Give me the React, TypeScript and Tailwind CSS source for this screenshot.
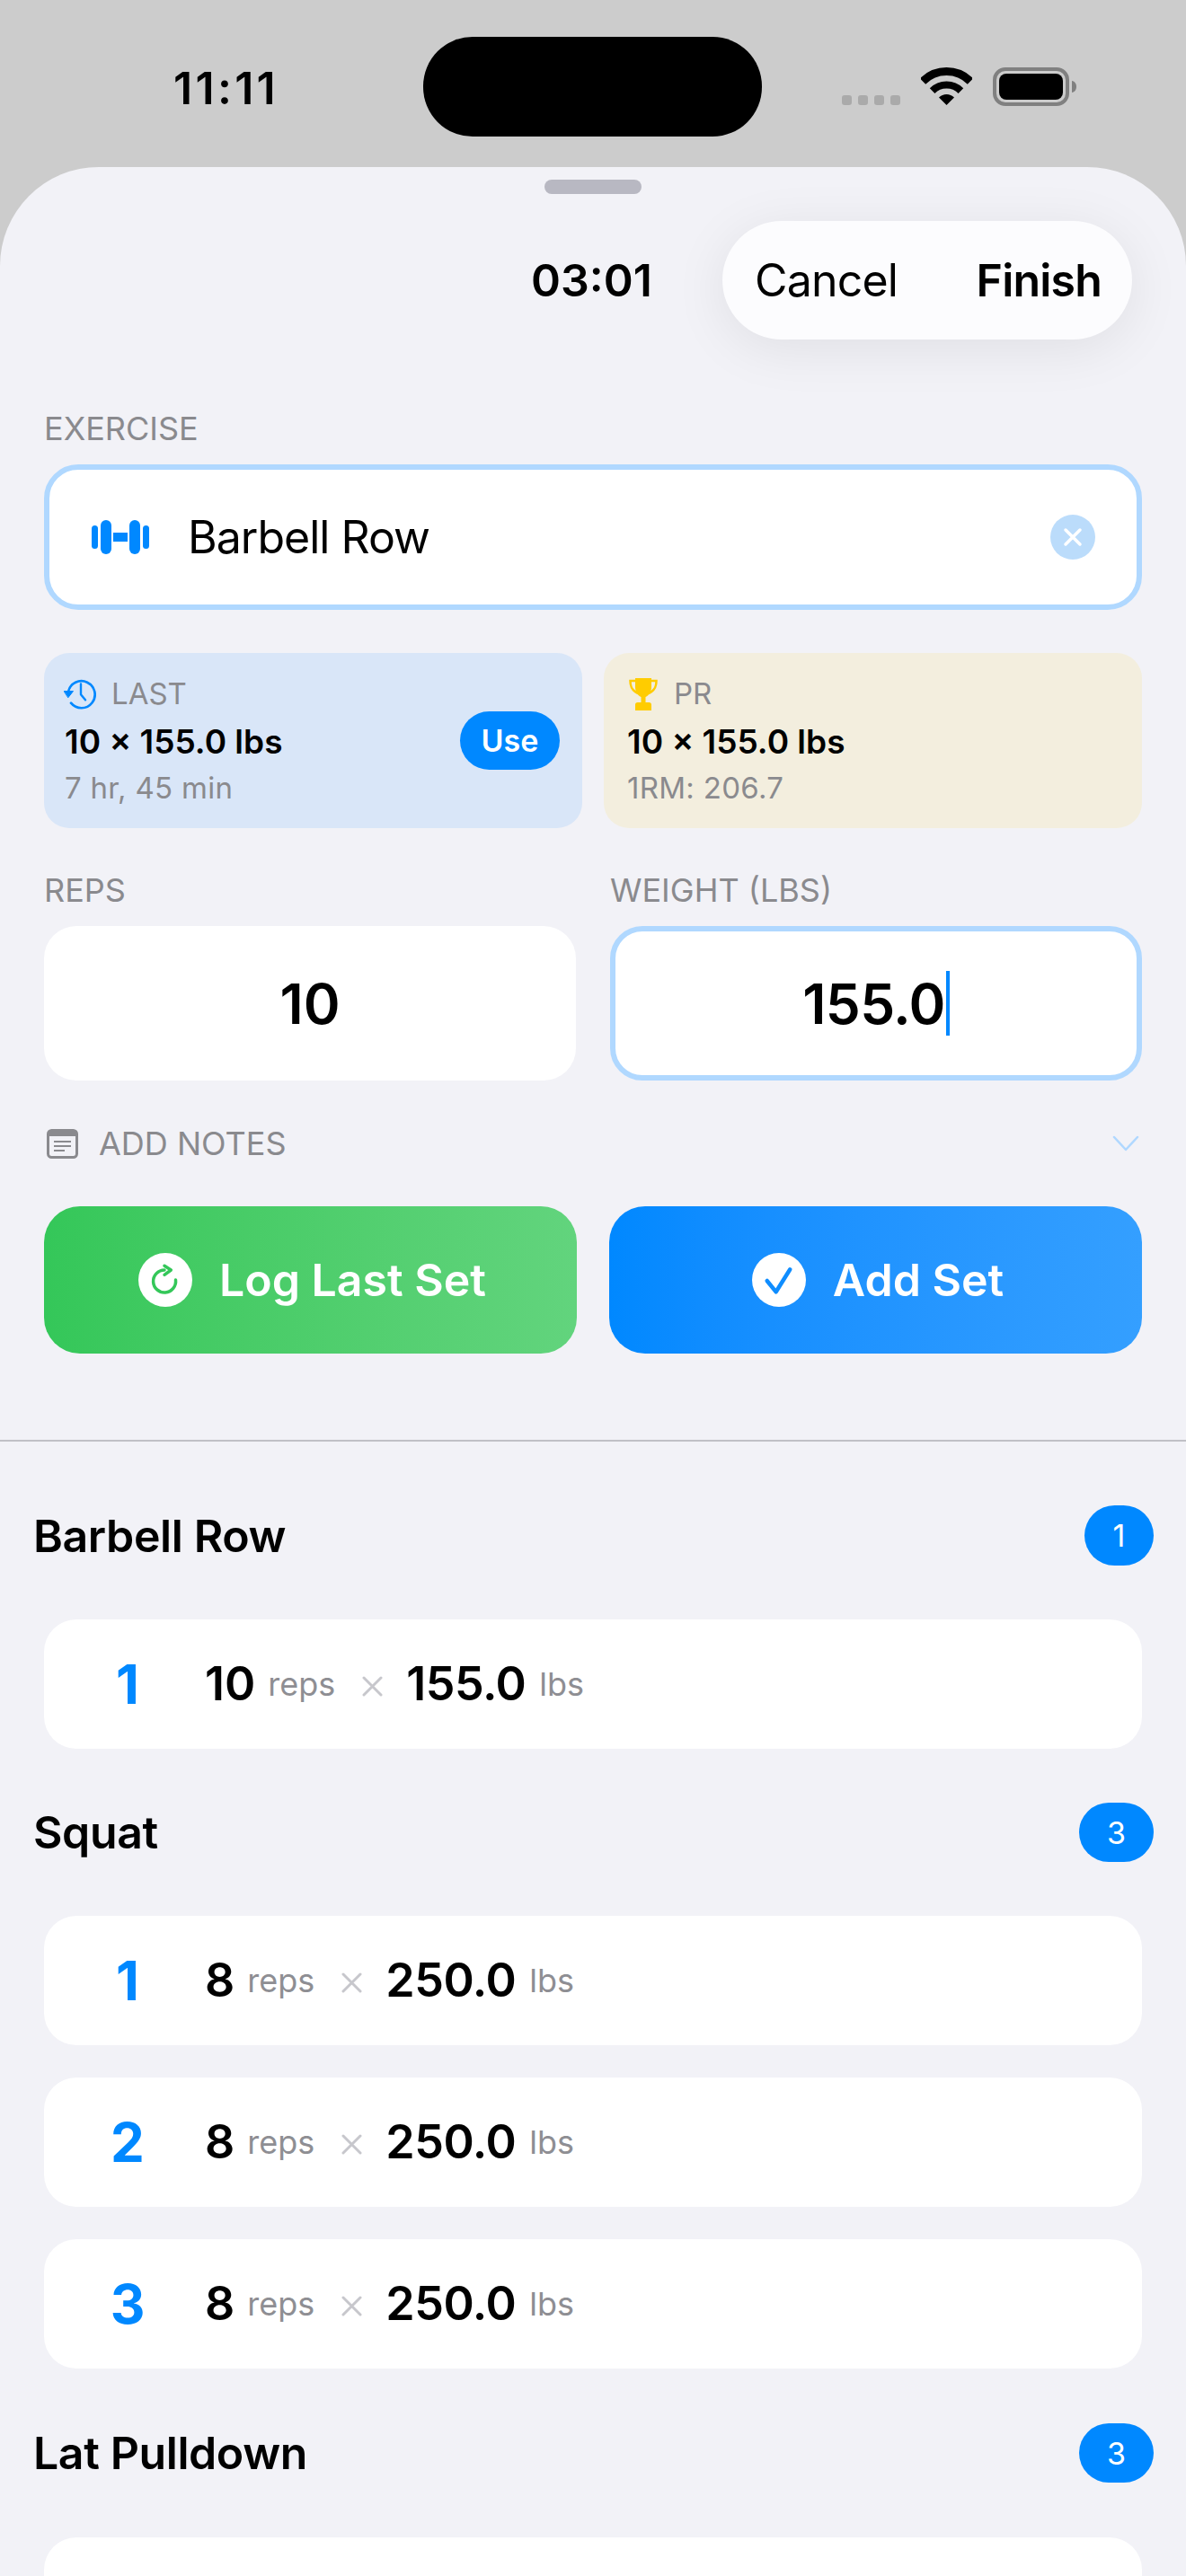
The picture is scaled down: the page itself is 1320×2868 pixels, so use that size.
const Barbell = () => (
  <svg width="64" height="38" viewBox="0 0 64 38" fill="#0088ff" className="shrink-0">
    <rect x="0" y="6" width="7" height="26" rx="3.5" />
    <rect x="10" y="0" width="12" height="38" rx="6" />
    <rect x="24" y="14" width="16" height="10" />
    <rect x="42" y="0" width="12" height="38" rx="6" />
    <rect x="57" y="6" width="7" height="26" rx="3.5" />
  </svg>
);

const ClockBack = () => (
  <svg width="38" height="36" viewBox="0 0 38 36" fill="none" stroke="#0088ff" strokeLinecap="round" strokeLinejoin="round" className="ml-[-1px] shrink-0">
    <path d="M5 15A15 15 0 1 1 8 27.700" strokeWidth="2.700" />
    <path d="M0.500 14.500H10.500L5 21.500Z" fill="#0088ff" strokeWidth="1" />
    <path d="M19 6.500V18.300L24 24.300" strokeWidth="2.400" />
  </svg>
);

const Trophy = () => (
  <svg width="32" height="36" viewBox="0 0 32 36" fill="#ffcc00" className="shrink-0">
    <path d="M7 0H25V10C25 16 21 20 18.500 21V27H22.500C24 27 25 28 25 29.500V36H7V29.500C7 28 8 27 9.500 27H13.500V21C11 20 7 16 7 10Z" />
    <path d="M7 3H1.500C1.500 10 3.500 14 10 17M25 3H30.500C30.500 10 28.500 14 22 17" fill="none" stroke="#ffcc00" strokeWidth="2.500" />
  </svg>
);

const NotesIcon = () => (
  <svg width="35" height="33" viewBox="0 0 35 33" className="shrink-0">
    <rect x="1.500" y="1.500" width="32" height="30" rx="4" fill="none" stroke="#8a8a8e" strokeWidth="3" />
    <path d="M3 3H32V8H3Z" fill="#8a8a8e" />
    <path d="M8 14H27M8 19H27M8 24H20" stroke="#8a8a8e" strokeWidth="2" />
  </svg>
);

const StatusIcons = () => (
  <div className="flex items-start">
    <div className="mt-[106px] flex gap-[7px]">
      <div className="h-[11px] w-[11px] rounded-[3px] bg-[#aaaaaa]" />
      <div className="h-[11px] w-[11px] rounded-[3px] bg-[#aaaaaa]" />
      <div className="h-[11px] w-[11px] rounded-[3px] bg-[#aaaaaa]" />
      <div className="h-[11px] w-[11px] rounded-[3px] bg-[#aaaaaa]" />
    </div>
    <svg width="57" height="42" viewBox="0 0 57 42" className="ml-[23px] mt-[75px]">
      <path d="M2 15.500A37.500 37.500 0 0 1 55 15.500" fill="none" stroke="#000" strokeWidth="9" />
      <path d="M12.600 26.100A22.500 22.500 0 0 1 44.400 26.100" fill="none" stroke="#000" strokeWidth="8" />
      <path d="M28.500 42L20 33.500A12 12 0 0 1 37 33.500Z" fill="#000" />
    </svg>
    <svg width="94" height="44" viewBox="0 0 94 44" className="ml-[23px] mt-[75px]">
      <rect x="2" y="2" width="81" height="39" rx="12" fill="none" stroke="#808080" strokeWidth="4" />
      <rect x="7" y="7" width="71" height="29" rx="8" fill="#000" />
      <path d="M88 15C91 15.500 93 18 93 21.500C93 25 91 27.500 88 28Z" fill="#808080" />
    </svg>
  </div>
);

const Label = ({ text }: { text: string }) => (
  <div className="h-[44px] text-[36px] leading-[44px] text-[#8a8a8e]">{text}</div>
);

const SetRow = ({ n, reps, weight }: { n: number; reps: number; weight: string }) => (
  <div className="flex h-[144px] items-center rounded-[36px] bg-white pl-[48px]">
    <div className="w-[90px] text-center text-[60px] font-bold leading-none text-[#0088ff]">{n}</div>
    <div className="ml-[41px] text-[52px] font-semibold leading-none text-black">{reps}</div>
    <div className="ml-[14px] text-[36px] leading-none text-[#8e8e93]">reps</div>
    <svg width="23" height="23" viewBox="0 0 23 23" stroke="#c7c7cc" strokeWidth="3" strokeLinecap="round" className="ml-[30px] mt-[4px] shrink-0">
      <path d="M2 2L21 21M21 2L2 21" />
    </svg>
    <div className="ml-[26px] text-[52px] font-semibold leading-none tracking-[-0.5px] text-black">{weight}</div>
    <div className="ml-[15px] text-[36px] leading-none text-[#8e8e93]">lbs</div>
  </div>
);

const SectionHeader = ({ title, count, wide }: { title: string; count: number; wide?: boolean }) => (
  <div className="flex items-center justify-between pl-[37px] pr-[36px]">
    <div className="text-[50px] font-semibold leading-none tracking-[-0.4px] text-black">{title}</div>
    <div
      className={`flex items-center justify-center rounded-full bg-[#0088ff] text-[34px] text-white ${wide ? "h-[66px] w-[83px]" : "h-[67px] w-[77px]"}`}
    >
      {count}
    </div>
  </div>
);

export default function App() {
  return (
    <div className="h-[2868px] w-[1320px] overflow-hidden bg-[#cccccc] font-['Inter',sans-serif]">
      <div className="flex h-[186px]">
        <div className="w-[471px] pl-[193px] pt-[68px] text-[50px] font-semibold leading-[60px] tracking-[3.3px] text-black">11:11</div>
        <div className="mt-[41px] h-[111px] w-[377px] rounded-[55px] bg-black" />
        <div className="pl-[89px]">
          <StatusIcons />
        </div>
      </div>

      <div className="h-[2682px] rounded-t-[110px] bg-[#f2f2f7] pt-[14px]">
        <div className="mx-auto h-[16px] w-[108px] rounded-full bg-[#b8b8c2]" />

        <div className="mt-[30px] flex items-center justify-between pl-[591px] pr-[60px]">
          <div className="text-[50px] font-semibold leading-none text-black">03:01</div>
          <div className="flex h-[132px] w-[456px] items-center justify-between rounded-full bg-[#fcfcfe] pl-[36px] pr-[34px] shadow-[0_10px_60px_rgba(0,0,0,0.08)]">
            <span className="text-[50px] leading-none tracking-[-0.8px] text-black">Cancel</span>
            <span className="text-[50px] font-semibold leading-none tracking-[-0.8px] text-black">Finish</span>
          </div>
        </div>

        <div className="px-[49px]">
          <div className="mt-[77px]">
            <Label text="EXERCISE" />
          </div>
          <div className="mt-[18px] flex h-[162px] items-center rounded-[38px] border-[6px] border-[#b0d8ff] bg-white pl-[47px] pr-[46px]">
            <Barbell />
            <div className="ml-[43px] flex-1 text-[50px] leading-none tracking-[-1px] text-black">Barbell Row</div>
            <div className="flex h-[50px] w-[50px] items-center justify-center rounded-full bg-[#bbdcfb]">
              <svg width="24" height="24" viewBox="0 0 24 24" stroke="#fff" strokeWidth="3.500" strokeLinecap="round">
                <path d="M4 4L20 20M20 4L4 20" />
              </svg>
            </div>
          </div>

          <div className="mt-[48px] flex gap-[24px]">
            <div className="flex h-[195px] w-[599px] items-center justify-between rounded-[28px] bg-[#d9e6f8] pl-[23px] pr-[25px]">
              <div>
                <div className="flex h-[40px] items-center">
                  <ClockBack />
                  <span className="ml-[15px] text-[33px] leading-none text-[#8a8a8e]">LAST</span>
                </div>
                <div className="mt-[11px] text-[37px] font-semibold leading-[44px] text-black">10 × 155.0 lbs</div>
                <div className="mt-[9px] text-[33px] leading-[40px] tracking-[0.3px] text-[#8a8a8e]">7 hr, 45 min</div>
              </div>
              <div className="flex h-[65px] w-[111px] items-center justify-center rounded-full bg-[#0088ff] text-[34px] font-semibold text-white">
                Use
              </div>
            </div>
            <div className="flex h-[195px] w-[599px] items-center rounded-[28px] bg-[#f3eede] pl-[26px]">
              <div>
                <div className="flex h-[40px] items-center">
                  <div className="ml-[2px]">
                    <Trophy />
                  </div>
                  <span className="ml-[18px] text-[33px] leading-none text-[#8a8a8e]">PR</span>
                </div>
                <div className="mt-[11px] text-[37px] font-semibold leading-[44px] text-black">10 × 155.0 lbs</div>
                <div className="mt-[9px] text-[33px] leading-[40px] tracking-[0.3px] text-[#8a8a8e]">1RM: 206.7</div>
              </div>
            </div>
          </div>

          <div className="mt-[47px] flex gap-[38px]">
            <div className="w-[592px]">
              <Label text="REPS" />
              <div className="mt-[18px] flex h-[172px] items-center justify-center rounded-[36px] bg-white text-[62px] font-semibold text-black">
                10
              </div>
            </div>
            <div className="w-[592px]">
              <Label text="WEIGHT (LBS)" />
              <div className="mt-[18px] flex h-[172px] items-center justify-center rounded-[36px] border-[6px] border-[#b0d8ff] bg-white text-[62px] font-semibold tracking-[-0.6px] text-black">
                155.0
                <span className="ml-[1px] h-[72px] w-[4px] bg-[#0088ff]" />
              </div>
            </div>
          </div>

          <div className="mt-[48px] flex h-[44px] items-center">
            <div className="ml-[3px]">
              <NotesIcon />
            </div>
            <span className="ml-[23px] flex-1 text-[36px] leading-none text-[#8a8a8e]">ADD NOTES</span>
            <svg width="30" height="18" viewBox="0 0 30 18" fill="none" stroke="#b0d8ff" strokeWidth="2.500" strokeLinecap="round" strokeLinejoin="round" className="mr-[3px]">
              <path d="M2 2L15 16L28 2" />
            </svg>
          </div>

          <div className="mt-[48px] flex gap-[36px]">
            <div className="flex h-[164px] w-[593px] items-center justify-center rounded-[40px] bg-gradient-to-r from-[#34c759] to-[#62d47d] pl-[4px]">
              <svg width="60" height="60" viewBox="0 0 60 60" fill="none" stroke="#34c759" strokeWidth="3.500" strokeLinecap="round" strokeLinejoin="round" className="shrink-0">
                <circle cx="30" cy="30" r="30" fill="#fff" stroke="none" />
                <path d="M41.500 30A12.500 12.500 0 1 1 29 19" />
                <path d="M29 14.300L36.300 19L29 24.300" />
              </svg>
              <span className="ml-[30px] text-[50px] font-semibold leading-none text-white">Log Last Set</span>
            </div>
            <div className="flex h-[164px] w-[593px] items-center justify-center rounded-[40px] bg-gradient-to-r from-[#0088ff] to-[#349fff] pl-[5px]">
              <svg width="60" height="60" viewBox="0 0 60 60" fill="none" stroke="#0f8dff" strokeWidth="4.500" strokeLinecap="round" strokeLinejoin="round" className="shrink-0">
                <circle cx="30" cy="30" r="30" fill="#fff" stroke="none" />
                <path d="M16.700 31L26.700 43.300L42.300 18.300" />
              </svg>
              <span className="ml-[30px] text-[50px] font-semibold leading-none text-white">Add Set</span>
            </div>
          </div>
        </div>

        <div className="mt-[96px] h-[2px] bg-[#c0c0c6]" />

        <div className="mt-[71px]">
          <SectionHeader title="Barbell Row" count={1} />
          <div className="mt-[60px] px-[49px]">
            <SetRow n={1} reps={10} weight="155.0" />
          </div>
        </div>

        <div className="mt-[60px]">
          <SectionHeader title="Squat" count={3} wide />
          <div className="mt-[60px] flex flex-col gap-[36px] px-[49px]">
            <SetRow n={1} reps={8} weight="250.0" />
            <SetRow n={2} reps={8} weight="250.0" />
            <SetRow n={3} reps={8} weight="250.0" />
          </div>
        </div>

        <div className="mt-[61px]">
          <SectionHeader title="Lat Pulldown" count={3} wide />
          <div className="mt-[61px] px-[49px]">
            <div className="h-[144px] rounded-[36px] bg-white" />
          </div>
        </div>
      </div>
    </div>
  );
}
